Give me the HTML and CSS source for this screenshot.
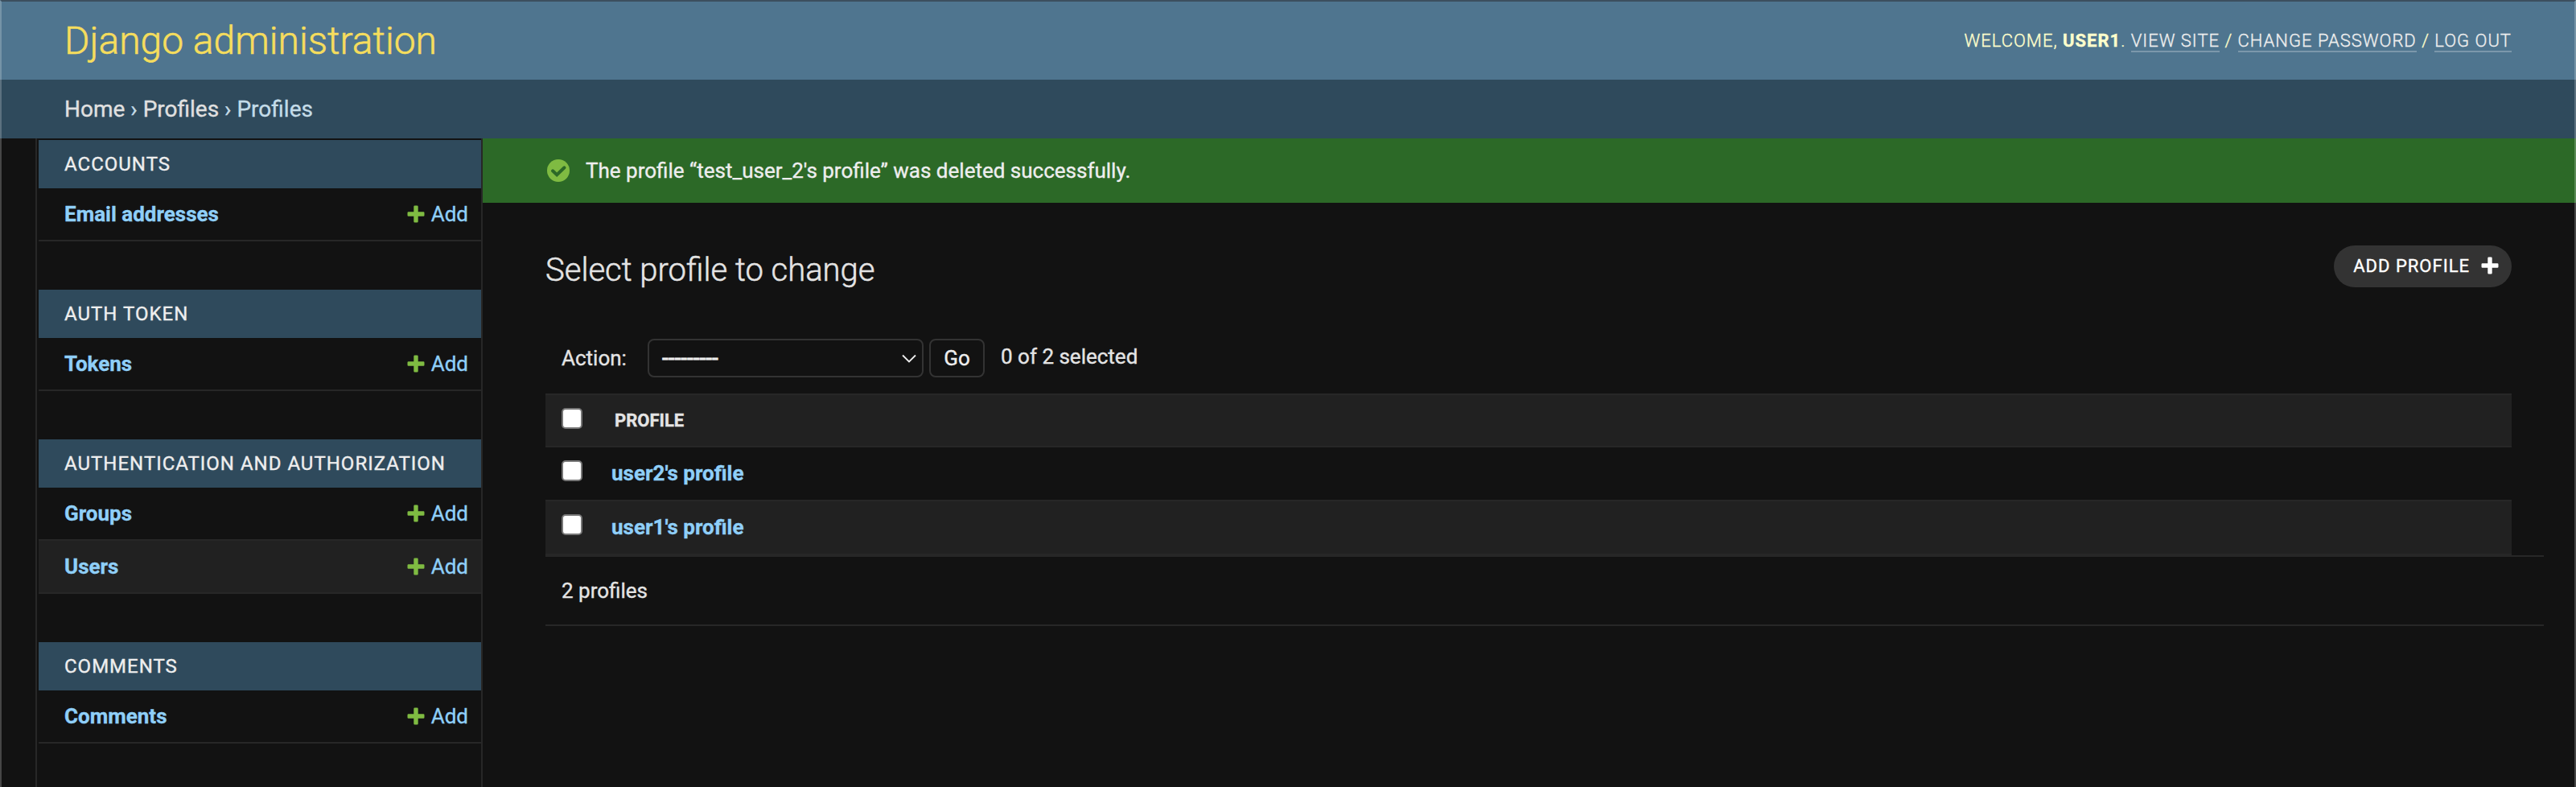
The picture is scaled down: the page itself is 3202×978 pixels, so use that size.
FILE: index.html
```html
<!DOCTYPE html>
<html lang="en">
<head>
<meta charset="utf-8">
<title>Select profile to change | Django site admin</title>
<link rel="stylesheet" href="styles.css">
</head>
<body>
<svg class="defs" aria-hidden="true">
  <symbol id="plus" viewBox="0 0 22 22"><path d="M9.500 0.500h3a1.200 1.200 0 0 1 1.200 1.200v6.600h6.600a1.200 1.200 0 0 1 1.200 1.200v3a1.200 1.200 0 0 1-1.200 1.200h-6.600v6.600a1.200 1.200 0 0 1-1.200 1.200h-3a1.200 1.200 0 0 1-1.200-1.200v-6.600h-6.600a1.200 1.200 0 0 1-1.200-1.200v-3a1.200 1.200 0 0 1 1.200-1.200h6.600v-6.600a1.200 1.200 0 0 1 1.200-1.200z"/></symbol>
</svg>
<div class="window">
<header class="header">
  <h1 class="brand">Django administration</h1>
  <div class="user-tools"><span>Welcome, <strong>user1</strong>. <a>View site</a> / <a>Change password</a> / <a>Log out</a></span></div>
</header>
<nav class="breadcrumbs"><span><a>Home</a> › <a>Profiles</a> › Profiles</span></nav>
<div class="main">
  <aside class="sidebar">
    <section class="module">
      <h2 class="caption">Accounts</h2>
      <div class="row"><a class="model">Email addresses</a><a class="add"><svg class="plus"><use href="#plus"/></svg>Add</a></div>
    </section>
    <section class="module">
      <h2 class="caption">Auth Token</h2>
      <div class="row"><a class="model">Tokens</a><a class="add"><svg class="plus"><use href="#plus"/></svg>Add</a></div>
    </section>
    <section class="module">
      <h2 class="caption">Authentication and Authorization</h2>
      <div class="row"><a class="model">Groups</a><a class="add"><svg class="plus"><use href="#plus"/></svg>Add</a></div>
      <div class="row alt"><a class="model">Users</a><a class="add"><svg class="plus"><use href="#plus"/></svg>Add</a></div>
    </section>
    <section class="module">
      <h2 class="caption">Comments</h2>
      <div class="row"><a class="model">Comments</a><a class="add"><svg class="plus"><use href="#plus"/></svg>Add</a></div>
    </section>
  </aside>
  <main class="content">
    <div class="message">
      <svg class="tick" viewBox="0 0 28 28"><circle cx="14" cy="14" r="14"/><path d="M7 14.300l5.200 5 9.300-9"/></svg>
      <span>The profile “test_user_2's profile” was deleted successfully.</span>
    </div>
    <div class="title-bar">
      <h2 class="title">Select profile to change</h2>
      <a class="add-button">Add profile<svg class="plus"><use href="#plus"/></svg></a>
    </div>
    <div class="actions">
      <span class="action-label">Action:</span>
      <div class="select"><span>---------</span><svg class="chevron" viewBox="0 0 18 11"><path d="M1 1.500l8 8 8-8"/></svg></div>
      <button class="go">Go</button>
      <span class="counter">0 of 2 selected</span>
    </div>
    <div class="results">
      <div class="result head"><span class="check"></span><span class="head-text">Profile</span></div>
      <div class="result"><span class="check"></span><a class="model">user2's profile</a></div>
      <div class="result alt"><span class="check"></span><a class="model">user1's profile</a></div>
    </div>
    <p class="paginator">2 profiles</p>
  </main>
</div>
</div>
</body>
</html>
```
FILE: styles.css
```css
* { box-sizing: border-box; }
body { margin: 0; background: #121212; color: #e4e4e4; font: 400 26px/32px Roboto, sans-serif; -webkit-text-stroke: .35px; }
h1, h2, p { margin: 0; font-weight: 400; }
.defs { display: none; }
.window { position: relative; width: 3202px; height: 978px; overflow: hidden; display: flex; flex-direction: column; }
/* Translucent window frame over the page edges */
.window::after { content: ""; position: absolute; inset: 0; border: 2px solid rgba(255, 255, 255, .22); border-top: 2px solid #3c4f5e; border-bottom: 0; }
.header { flex: none; height: 99px; padding: 2px 80px 0; background: #4f758f; color: #ffffcc; display: flex; justify-content: space-between; align-items: center; }
.brand { color: #f5dd5d; font-size: 48px; font-weight: 300; line-height: 58px; -webkit-text-stroke: .6px; }
.user-tools { font-size: 22px; font-weight: 300; letter-spacing: 1px; text-transform: uppercase; }
.user-tools strong { font-weight: 700; }
.user-tools a { color: #eee; border-bottom: 2px solid rgba(255, 255, 255, .25); }
.breadcrumbs { flex: none; height: 73px; padding: 0 80px; background: #2f4a5c; color: #c4dce8; font-size: 28px; display: flex; align-items: center; }
.breadcrumbs a { color: #e0e0e0; }
.main { flex: 1; display: flex; min-height: 0; }
.sidebar { width: 556px; margin-left: 44px; padding: 2px 0 0 2px; border: solid #272727; border-width: 0 2px; display: flex; flex-direction: column; gap: 60px; }
.caption { height: 60px; padding: 0 32px; background: #2f4a5c; color: #eee; font-size: 24px; line-height: 60px; letter-spacing: 1px; text-transform: uppercase; }
.row { height: 66px; padding: 0 16px 0 32px; border-bottom: 2px solid #272727; display: flex; justify-content: space-between; align-items: center; color: #8fcff8; }
.alt { background: #212121; }
.model { color: #8fcff8; font-weight: 700; }
.add { display: flex; align-items: center; gap: 8px; }
.plus { width: 22px; height: 22px; fill: #7fbb42; }
.content { flex: 1; }
.message { height: 80px; padding: 0 80px; background: #2c6927; color: #eee; display: flex; align-items: center; gap: 20px; }
.tick { width: 28px; height: 28px; }
.tick circle { fill: #7fbb42; }
.tick path { fill: none; stroke: #2c6927; stroke-width: 4; stroke-linecap: round; }
.title-bar { height: 122px; padding: 53px 80px 0 78px; display: flex; justify-content: space-between; align-items: flex-start; }
.title { margin-top: 2px; font-size: 40px; font-weight: 300; line-height: 58px; -webkit-text-stroke: .5px; }
.add-button { height: 52px; border-radius: 26px; padding: 0 16px 0 24px; display: flex; align-items: center; gap: 14px; background: #333; color: #fff; font-size: 22px; letter-spacing: 1px; text-transform: uppercase; }
.add-button .plus { margin-bottom: 2px; fill: #fff; }
.actions { height: 115px; padding: 47px 98px 0; display: flex; align-items: flex-start; }
.action-label { width: 107px; line-height: 48px; }
.select { width: 343px; height: 48px; padding: 0 7px 0 16px; border: 2px solid #333; border-radius: 8px; display: flex; align-items: center; justify-content: space-between; color: #eee; font-size: 28px; -webkit-text-stroke: .8px; }
.chevron { width: 18px; height: 11px; fill: none; stroke: #eee; stroke-width: 1.8; }
.go { width: 69px; height: 48px; margin: 0 20px 0 7px; padding: 0; border: 2px solid #333; border-radius: 8px; background: #121212; color: #eee; font: inherit; }
.counter { line-height: 44px; }
.results { margin: 0 80px 0 78px; }
.result { height: 67px; padding: 0 20px 2px; border-bottom: 2px solid #272727; display: flex; align-items: center; }
.check { align-self: flex-start; width: 26px; height: 26px; margin: 16px 36px 0 0; border: 2px solid #767676; border-radius: 5px; background: #fff; }
.head { padding-bottom: 0; border-top: 2px solid #272727; background: #212121; }
.head .check { margin-right: 40px; }
.head-text { font-size: 22px; font-weight: 700; text-transform: uppercase; }
.paginator { margin: 0 40px 0 78px; padding: 0 20px; height: 88px; border: solid #272727; border-width: 2px 0; line-height: 84px; }
```
